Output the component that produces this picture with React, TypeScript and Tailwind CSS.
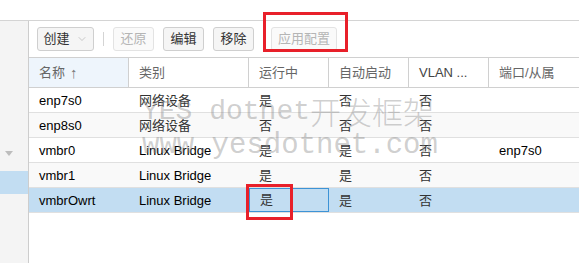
import { ChevronDown } from 'lucide-react';

const cols = ['w-[100px]', 'w-[120px]', 'w-[80px]', 'w-[80px]', 'w-[80px]', 'flex-1'];

const headers = ['名称', '类别', '运行中', '自动启动', 'VLAN ...', '端口/从属'];

const rows = [
  ['enp7s0', '网络设备', '是', '否', '否', ''],
  ['enp8s0', '网络设备', '否', '否', '否', ''],
  ['vmbr0', 'Linux Bridge', '是', '是', '否', 'enp7s0'],
  ['vmbr1', 'Linux Bridge', '是', '是', '否', ''],
  ['vmbrOwrt', 'Linux Bridge', '是', '是', '否', ''],
];

function Btn({ label, disabled, w }: { label: string; disabled?: boolean; w: string }) {
  return (
    <div
      className={`flex h-[24px] ${w} items-center justify-center rounded-[3px] border text-[13px] ${
        disabled ? 'border-[#e3e3e3] bg-[#fafafa] text-[#b5b5b5]' : 'border-[#cfcfcf] bg-[#f5f5f5] text-[#333]'
      }`}
    >
      {label}
    </div>
  );
}

export default function App() {
  return (
    <div
      className="relative h-[263px] w-[579px] overflow-hidden bg-white"
      style={{ fontFamily: '"Liberation Sans", "Noto Sans CJK SC", sans-serif' }}
    >
      <div className="h-[21px] border-b border-[#d4d4d4]" />
      <div className="flex h-[242px]">
        <div className="w-[29px] shrink-0 border-r border-[#cdcdcd] bg-[#f4f4f4] pt-[130px]">
          <div className="ml-[5px] h-0 w-0 border-x-[4px] border-t-[5px] border-x-transparent border-t-[#bdbdbd]" />
          <div className="mt-[15px] h-[23px] bg-[#c2ddf2]" />
        </div>
        <div className="flex-1">
          <div className="flex h-[36px] items-center pl-[8px]">
            <div className="flex h-[24px] w-[57px] items-center justify-center gap-[6px] rounded-[3px] border border-[#cfcfcf] bg-[#f5f5f5] text-[13px] text-[#333]">
              <span>创建</span>
              <ChevronDown size={12} strokeWidth={1.2} className="text-[#aaa]" />
            </div>
            <div className="mx-[9px] h-[14px] w-px bg-[#d4d4d4]" />
            <Btn label="还原" disabled w="w-[41px]" />
            <div className="w-[9px]" />
            <Btn label="编辑" w="w-[41px]" />
            <div className="w-[9px]" />
            <Btn label="移除" w="w-[41px]" />
            <div className="w-[17px]" />
            <Btn label="应用配置" disabled w="w-[66px]" />
          </div>
          <div className="flex h-[31px] border-y border-[#d0d0d0] text-[13px] text-[#666]">
            {headers.map((h, i) => (
              <div
                key={h}
                className={`${cols[i]} flex items-center pl-[10px] ${i < 5 ? 'border-r border-[#d0d0d0]' : ''} ${
                  i === 0 ? 'bg-[#eef5fc]' : ''
                } ${i === 4 ? 'text-[#444]' : ''}`}
              >
                {h}
                {i === 0 && <span className="ml-[5px] text-[15px] font-light leading-none text-[#777]">↑</span>}
              </div>
            ))}
          </div>
          {rows.map((r, ri) => (
            <div
              key={r[0]}
              className={`flex h-[25px] border-b border-[#e0e0e0] pt-px text-[13px] ${
                ri === 4 ? 'bg-[#c2ddf2]' : ri % 2 === 1 ? 'bg-[#f9f9f9]' : 'bg-white'
              }`}
            >
              {r.map((c, ci) => (
                <div
                  key={ci}
                  className={`${cols[ci]} flex items-center pl-[10px] ${
                    ci === 0 || ci === 5 || (ci === 1 && ri >= 2) ? 'text-black' : 'text-[#333]'
                  } ${ri === 4 && ci === 2 ? '-mt-px border border-[#3d93d6] pl-[9px]' : ''}`}
                >
                  {c}
                </div>
              ))}
            </div>
          ))}
        </div>
      </div>

      {/* watermark */}
      <div className="pointer-events-none absolute left-[142px] top-[92px] text-[rgba(140,140,140,0.42)]">
        <div className="flex h-[34px] items-end leading-none">
          <span className="text-[28px]" style={{ fontFamily: '"Liberation Mono", monospace' }}>
            YES dotnet
          </span>
          <span className="text-[31px] font-light" style={{ fontFamily: '"Noto Sans CJK SC", sans-serif' }}>
            开发框架
          </span>
        </div>
        <div className="mt-[5px] text-[29px] leading-none" style={{ fontFamily: '"Liberation Mono", monospace' }}>
          www.yesdotnet.com
        </div>
      </div>

      {/* annotations */}
      <div className="pointer-events-none absolute left-[263px] top-[12px] h-[40px] w-[85px] border-[3px] border-[#e8202a]" />
      <div className="pointer-events-none absolute left-[246px] top-[184px] h-[36px] w-[47px] border-[3px] border-[#e8202a]" />
    </div>
  );
}
